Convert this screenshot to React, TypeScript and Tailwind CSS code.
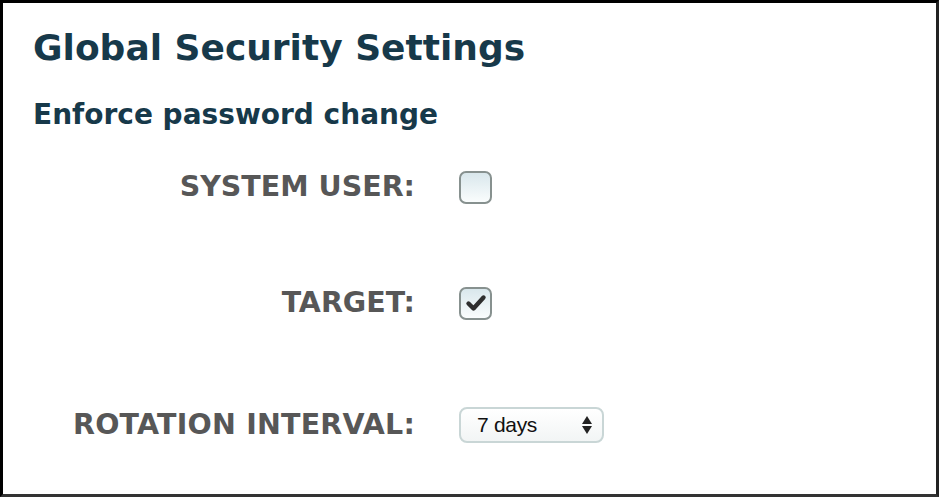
import React from "react";

function Checkbox({ checked }: { checked?: boolean }) {
  return (
    <div className="w-[33px] h-[33px] rounded-[7px] border-2 border-[#87918f] bg-gradient-to-b from-[#d9e7ec] to-[#fafdfd] flex items-center justify-center">
      {checked && (
        <svg width="22" height="20" viewBox="0 0 22 20">
          <path d="M3.5 10.5 L8.5 15.5 L18.5 4.5" fill="none" stroke="#2e2e2e" strokeWidth="4.4" strokeLinecap="round" strokeLinejoin="round" />
        </svg>
      )}
    </div>
  );
}

export default function App() {
  const font = { fontFamily: '"DejaVu Sans", Verdana, sans-serif' };
  return (
    <div className="w-[939px] h-[497px] bg-white border-[3px] border-black border-r-[#222] border-b-[#333] box-border" style={font}>
      <div className="pl-[30px] pt-[25px]">
        <h1 className="text-[36px] leading-[40px] font-bold text-[#17394a]">Global Security Settings</h1>
        <h2 className="mt-[30px] text-[28px] leading-[34px] font-bold text-[#17394a]">Enforce password change</h2>
        <div className="grid grid-cols-[382px_auto] gap-x-[44px] mt-[35px] items-center">
          <div className="text-right text-[28.5px] font-bold text-[#575757] h-[40px] leading-[40px]">SYSTEM USER:</div>
          <div><Checkbox /></div>
          <div className="text-right text-[28.5px] font-bold text-[#575757] h-[40px] leading-[40px] mt-[76px]">TARGET:</div>
          <div className="mt-[76px]"><Checkbox checked /></div>
          <div className="text-right text-[28.5px] font-bold text-[#575757] h-[40px] leading-[40px] mt-[82px] tracking-[0.2px]">ROTATION INTERVAL:</div>
          <div className="mt-[82px]">
            <div className="w-[145px] h-[36px] rounded-[8px] border-2 border-[#c9d6d6] bg-gradient-to-b from-white to-[#f2f5f5] flex items-center justify-between pl-[16px] pr-[9px]">
              <span className="text-[21px] text-[#111] tracking-[-0.3px]" style={{ fontFamily: '"Liberation Sans", Arial, sans-serif' }}>7 days</span>
              <svg width="12" height="22" viewBox="0 0 12 22">
                <path d="M6 2 L11 10 L1 10 Z" fill="#222" />
                <path d="M6 20 L11 12 L1 12 Z" fill="#222" />
              </svg>
            </div>
          </div>
        </div>
      </div>
    </div>
  );
}
